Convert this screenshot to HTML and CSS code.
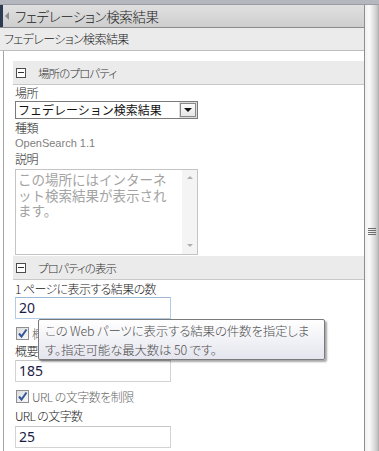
FILE: index.html
```html
<html>
<head>
    <meta http-equiv="Content-Type" content="text/html;charset=utf-8">
    <link rel="stylesheet" href="styles.css">
</head>
<body>
    <div id="main">
        <div class="topband"></div>
        <div class="frame">
            <div class="content">
                <div class="titlebar">
                    <span class="edge"></span>
                    <span class="back"></span>
                    <span class="title">フェデレーション検索結果</span>
                </div>
                <div class="subtitle">フェデレーション検索結果</div>

                <div class="panel">
                    <div class="section-head"><span class="toggle"></span>場所のプロパティ</div>
                    <div class="fields">
                        <div class="label">場所</div>
                        <div class="select">
                            <span class="select-text">フェデレーション検索結果</span>
                            <span class="drop"><span class="arrow"></span></span>
                        </div>
                        <div class="label kind">種類</div>
                        <div class="value">OpenSearch 1.1</div>
                        <div class="label">説明</div>
                        <div class="textarea">
                            <div class="textarea-text">この場所にはインターネ<br>ット検索結果が表示され<br>ます。</div>
                            <div class="textarea-scroll">
                                <span class="up"></span>
                                <span class="down"></span>
                            </div>
                        </div>
                    </div>

                    <div class="section-head second"><span class="toggle"></span>プロパティの表示</div>
                    <div class="fields">
                        <div class="label first">1 ページに表示する結果の数</div>
                        <div class="input focus">20</div>
                        <div class="check-row">
                            <span class="check"><svg width="11" height="11" viewBox="0 0 11 11"><path d="M2 5.5 L4.5 8.5 L9.5 1.5" fill="none" stroke="#34589c" stroke-width="2"/></svg></span>
                            <span class="check-label">概要の文字数を制限</span>
                        </div>
                        <div class="label">概要の文字数</div>
                        <div class="input">185</div>
                        <div class="check-row">
                            <span class="check"><svg width="11" height="11" viewBox="0 0 11 11"><path d="M2 5.5 L4.5 8.5 L9.5 1.5" fill="none" stroke="#34589c" stroke-width="2"/></svg></span>
                            <span class="check-label">URL の文字数を制限</span>
                        </div>
                        <div class="label url">URL の文字数</div>
                        <div class="input url">25</div>
                    </div>
                </div>
            </div>
            <div class="vscroll">
                <div class="grip"><i></i><i></i><i></i><i></i></div>
            </div>
        </div>

        <div class="tooltip">この Web パーツに表示する結果の件数を指定しま<br>す。指定可能な最大数は 50 です。</div>
    </div>
</body>
</html>
```

FILE: styles.css
```css
* {
    box-sizing: border-box;
}

body {
    margin: 0;
    background: #fff;
    font-family: "Noto Sans CJK JP", "Noto Sans", sans-serif;
    font-weight: 300;
    font-size: 12px;
    color: #333;
}

#main {
    position: relative;
    width: 379px;
    height: 451px;
    overflow: hidden;
    display: flex;
    flex-direction: column;
}

.topband {
    height: 5px;
    background: #b4b7bd;
    border-bottom: 1px solid #999ca3;
}

.frame {
    flex: 1;
    display: flex;
}

.content {
    width: 364px;
}

/* title rows */
.titlebar {
    height: 23px;
    display: flex;
    align-items: center;
    background: linear-gradient(#e0e0e0, #cecece);
    border-bottom: 1px solid #8a8a8a;
}

.edge {
    align-self: stretch;
    width: 3px;
    background: #2c3b52;
}

.back {
    width: 0;
    height: 0;
    margin-left: 2px;
    border-right: 4px solid #8c8c8c;
    border-top: 4px solid transparent;
    border-bottom: 4px solid transparent;
}

.title {
    margin-left: 6px;
    font-size: 13.5px;
    line-height: 22px;
    letter-spacing: -0.4px;
    color: #222;
    font-feature-settings: "palt";
}

.subtitle {
    height: 23px;
    padding-left: 4px;
    background: #ebebeb;
    border-bottom: 1px solid #bdbdbd;
    font-size: 12px;
    line-height: 22px;
    letter-spacing: -0.6px;
    color: #222;
    font-feature-settings: "palt";
}

/* panel */
.panel {
    margin-left: 3px;
    border-left: 1px solid #a4a4a4;
    padding: 10px 0 0 9px;
    height: 400px;
}

.section-head {
    height: 24px;
    display: flex;
    align-items: center;
    padding-left: 3px;
    background: #ebebeb;
    border-bottom: 1px solid #c8c8c8;
    font-size: 11.5px;
    letter-spacing: -0.9px;
    color: #333;
    font-feature-settings: "palt";
}

.section-head.second {
    margin-top: 1px;
}

.toggle {
    position: relative;
    width: 10px;
    height: 10px;
    margin-right: 12px;
    border: 1px solid #4c4c4c;
    background: #fff;
}

.toggle:after {
    content: "";
    position: absolute;
    left: 1px;
    top: 3px;
    width: 6px;
    height: 1px;
    background: #333;
}

.fields {
    padding-left: 2px;
}

.label {
    line-height: 16px;
    height: 16px;
    letter-spacing: -0.6px;
    color: #222;
    font-feature-settings: "palt";
}

.label.kind {
    margin-top: 1px;
}

.label.first {
    margin-top: 1px;
}

.label.url {
    margin-top: 2px;
}

.value {
    height: 15px;
    line-height: 15px;
    font-family: "Liberation Sans", sans-serif;
    font-size: 11px;
    color: #808080;
}

/* select */
.select {
    width: 183px;
    height: 18px;
    display: flex;
    align-items: center;
    border: 1px solid #7a7a7a;
    padding: 0 1px 0 2px;
}

.select-text {
    flex: 1;
    font-size: 12px;
    font-weight: 400;
    line-height: 16px;
    color: #111;
}

.drop {
    width: 16px;
    height: 14px;
    border: 1px solid #8a8a8a;
    outline: 1px solid #dcdcdc;
    background: linear-gradient(#fbfbfb, #e6e6e6);
    display: flex;
    align-items: center;
    justify-content: center;
}

.arrow {
    width: 0;
    height: 0;
    border-top: 4px solid #111;
    border-left: 4px solid transparent;
    border-right: 4px solid transparent;
}

/* textarea */
.textarea {
    margin-top: 2px;
    width: 183px;
    height: 86px;
    display: flex;
    border: 1px solid #c4c4c4;
}

.textarea-text {
    flex: 1;
    padding: 2px 0 0 2px;
    font-size: 13.5px;
    font-weight: 400;
    line-height: 15.5px;
    color: #a3a3a3;
    white-space: nowrap;
}

.textarea-scroll {
    width: 15px;
    background: #f4f4f4;
    display: flex;
    flex-direction: column;
    justify-content: space-between;
    align-items: center;
    padding: 6px 0 7px;
}

.textarea-scroll .up {
    border-bottom: 3px solid #b0b0b0;
    border-left: 3px solid transparent;
    border-right: 3px solid transparent;
}

.textarea-scroll .down {
    border-top: 3px solid #b0b0b0;
    border-left: 3px solid transparent;
    border-right: 3px solid transparent;
}

/* inputs */
.input {
    width: 156px;
    height: 22px;
    margin-top: 1px;
    padding-left: 3px;
    border: 1px solid #d3d3d3;
    border-top-color: #c6c6c6;
    font-family: "Noto Sans", sans-serif;
    font-weight: 400;
    font-size: 14px;
    line-height: 20px;
    color: #1c1c48;
}

.input.focus {
    margin-top: 0;
    border-color: #b3cbe3;
    border-top-color: #9eb9d6;
}

.input.url {
    margin-top: 2px;
}

.check-row {
    height: 20px;
    margin-top: 4px;
    display: flex;
    align-items: center;
}

.check {
    width: 13px;
    height: 13px;
    margin-left: 1px;
    margin-right: 3px;
    border: 1px solid #8f8f8f;
    background: linear-gradient(135deg, #dcdcdc, #fafafa);
    display: flex;
    align-items: center;
    justify-content: center;
}

.check-label {
    color: #666;
    letter-spacing: -0.5px;
    font-feature-settings: "palt";
}

/* page scrollbar */
.vscroll {
    position: relative;
    width: 15px;
    border-left: 1px solid #8e8e8e;
    background: linear-gradient(to right, #efefef, #fbfbfb 30%, #dedede 65%, #c2c2c2 90%, #a9a9a9);
}

.grip {
    position: absolute;
    left: 3px;
    top: 223px;
    width: 8px;
}

.grip i {
    display: block;
    height: 1px;
    margin-bottom: 1px;
    background: #6e6e6e;
}

/* hover tip */
.tooltip {
    position: absolute;
    left: 38px;
    top: 319px;
    width: 287px;
    height: 41px;
    padding: 1px 0 0 6px;
    border: 1px solid #7a7a7a;
    border-radius: 2px;
    background: linear-gradient(#ffffff, #e4e5ee);
    box-shadow: 2px 2px 2px rgba(0, 0, 0, 0.35);
    font-size: 12.5px;
    line-height: 19px;
    letter-spacing: -0.2px;
    color: #4f4f4f;
    white-space: nowrap;
    font-feature-settings: "palt";
}
```
